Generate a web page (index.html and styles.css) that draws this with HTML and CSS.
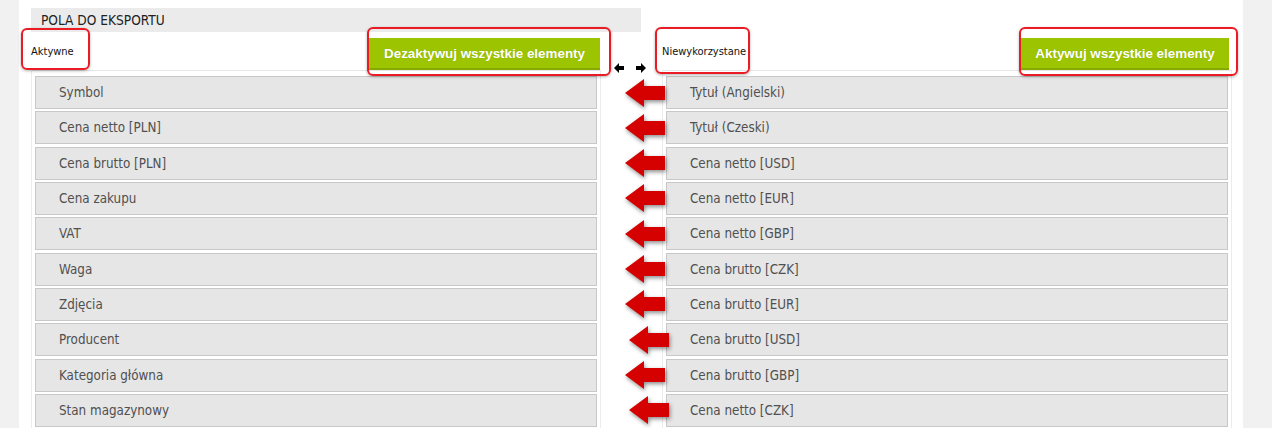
FILE: index.html
```html
<!DOCTYPE html>
<html lang="pl">
<head>
<meta charset="utf-8">
<title>Pola do eksportu</title>
<link rel="stylesheet" href="styles.css">
</head>
<body>
<div class="page">
  <div class="panel">
    <div class="section-title">POLA DO EKSPORTU</div>
    <div class="columns">
      <div class="col col-active">
        <div class="col-head">
          <span class="label mark">Aktywne</span>
          <button class="btn mark">Dezaktywuj wszystkie elementy</button>
        </div>
        <ul class="list">
          <li class="row">Symbol</li>
          <li class="row">Cena netto [PLN]</li>
          <li class="row">Cena brutto [PLN]</li>
          <li class="row">Cena zakupu</li>
          <li class="row">VAT</li>
          <li class="row">Waga</li>
          <li class="row">Zdjęcia</li>
          <li class="row">Producent</li>
          <li class="row">Kategoria główna</li>
          <li class="row">Stan magazynowy</li>
        </ul>
      </div>
      <div class="mid">
        <svg class="swap" width="32" height="10" viewBox="0 0 32 10"><polygon points="0,5 5,0 5,3 10,3 10,7 5,7 5,10" fill="#000"/><polygon points="32,5 27,0 27,3 22,3 22,7 27,7 27,10" fill="#000"/></svg>
        <div class="arrows">
          <div class="slot"><svg class="arrow" width="40" height="28" viewBox="0 0 40 28"><polygon points="0,14 19,0 19,7 40,7 40,21 19,21 19,28"/></svg></div>
          <div class="slot"><svg class="arrow" width="40" height="28" viewBox="0 0 40 28"><polygon points="0,14 19,0 19,7 40,7 40,21 19,21 19,28"/></svg></div>
          <div class="slot"><svg class="arrow" width="40" height="28" viewBox="0 0 40 28"><polygon points="0,14 19,0 19,7 40,7 40,21 19,21 19,28"/></svg></div>
          <div class="slot"><svg class="arrow" width="40" height="28" viewBox="0 0 40 28"><polygon points="0,14 19,0 19,7 40,7 40,21 19,21 19,28"/></svg></div>
          <div class="slot"><svg class="arrow" width="40" height="28" viewBox="0 0 40 28"><polygon points="0,14 19,0 19,7 40,7 40,21 19,21 19,28"/></svg></div>
          <div class="slot"><svg class="arrow" width="40" height="28" viewBox="0 0 40 28"><polygon points="0,14 19,0 19,7 40,7 40,21 19,21 19,28"/></svg></div>
          <div class="slot"><svg class="arrow" width="40" height="28" viewBox="0 0 40 28"><polygon points="0,14 19,0 19,7 40,7 40,21 19,21 19,28"/></svg></div>
          <div class="slot"><svg class="arrow nudge" width="40" height="28" viewBox="0 0 40 28"><polygon points="0,14 19,0 19,7 40,7 40,21 19,21 19,28"/></svg></div>
          <div class="slot"><svg class="arrow" width="40" height="28" viewBox="0 0 40 28"><polygon points="0,14 19,0 19,7 40,7 40,21 19,21 19,28"/></svg></div>
          <div class="slot"><svg class="arrow nudge" width="40" height="28" viewBox="0 0 40 28"><polygon points="0,14 19,0 19,7 40,7 40,21 19,21 19,28"/></svg></div>
        </div>
      </div>
      <div class="col col-unused">
        <div class="col-head">
          <span class="label mark">Niewykorzystane</span>
          <button class="btn mark">Aktywuj wszystkie elementy</button>
        </div>
        <ul class="list">
          <li class="row">Tytuł (Angielski)</li>
          <li class="row">Tytuł (Czeski)</li>
          <li class="row">Cena netto [USD]</li>
          <li class="row">Cena netto [EUR]</li>
          <li class="row">Cena netto [GBP]</li>
          <li class="row">Cena brutto [CZK]</li>
          <li class="row">Cena brutto [EUR]</li>
          <li class="row">Cena brutto [USD]</li>
          <li class="row">Cena brutto [GBP]</li>
          <li class="row">Cena netto [CZK]</li>
        </ul>
      </div>
    </div>
  </div>
</div>
</body>
</html>
```

FILE: styles.css
```css
* { box-sizing: border-box; }

html, body {
  margin: 0;
  padding: 0;
  height: 100%;
  background: #f1f1f1;
  overflow: hidden;
}

body {
  font-family: "DejaVu Sans Condensed", "Liberation Sans", sans-serif;
  color: #333;
}

.page {
  margin-left: 19px;
  width: 1224px;
  min-height: 100%;
  background: #fff;
}

.panel {
  padding: 8px 0 0 12px;
}

.section-title {
  width: 610px;
  height: 24px;
  line-height: 24px;
  padding-left: 10px;
  background: #ebebeb;
  font-size: 13.6px;
  color: #222;
}

.columns {
  display: flex;
  align-items: flex-start;
}

.col {
  width: 570px;
}

.col-head {
  height: 38px;
  display: flex;
  justify-content: space-between;
  align-items: flex-end;
  padding-right: 1px;
}

.col-unused .col-head {
  padding-right: 3px;
}

.label {
  align-self: center;
  font-size: 11px;
  color: #111;
  position: relative;
}

.btn {
  height: 32px;
  border: 0;
  border-bottom: 2px solid #87aa00;
  background: #9cc400;
  color: #fff;
  font-family: "Liberation Sans", Arial, sans-serif;
  font-weight: bold;
  font-size: 13.4px;
  padding: 0;
  position: relative;
  text-shadow: 0 0 1px rgba(0,0,0,.15);
}

.col-active .btn { width: 231px; }
.col-unused .btn { width: 208px; }

/* red annotation frames */
.mark::after {
  content: "";
  position: absolute;
  border: 2px solid #ea1b22;
  border-radius: 6px;
  box-shadow: 0 1px 3px rgba(0,0,0,.3);
  pointer-events: none;
}

.col-active .label.mark::after { left: -10px; top: -17px; width: 65px; height: 38px; }
.col-active .btn.mark::after { left: -2px; top: -11px; width: 240px; height: 45px; }
.col-unused .label.mark::after { left: -7px; top: -18px; width: 91px; height: 43px; }
.col-unused .btn.mark::after { left: -2px; top: -11px; width: 215px; height: 45px; }

.list {
  list-style: none;
  margin: 0;
  padding: 5px 3px 0;
  border-top: 1px solid #e6e6e6;
  border-left: 1px solid #ececec;
  border-right: 1px solid #ececec;
  display: flex;
  flex-direction: column;
  gap: 2.33px;
  height: 400px;
}

.row {
  height: 33px;
  flex: none;
  display: flex;
  align-items: center;
  padding-left: 23px;
  background: #e6e6e6;
  border: 1px solid #c8c8c8;
  font-size: 13.3px;
  color: #505050;
}

.mid {
  width: 61px;
  padding-top: 31px;
  position: relative;
  z-index: 1;
}

.swap {
  display: block;
  margin-left: 13px;
  height: 10px;
}

.arrows {
  margin-top: 3px;
  display: flex;
  flex-direction: column;
  gap: 2.33px;
}

.slot {
  height: 33px;
  display: flex;
  align-items: center;
}

.arrow {
  display: block;
  margin-left: 24px;
  fill: #d50000;
  filter: drop-shadow(1px 2px 2px rgba(0,0,0,.45));
  overflow: visible;
}

.arrow.nudge { margin-left: 28px; }
```
